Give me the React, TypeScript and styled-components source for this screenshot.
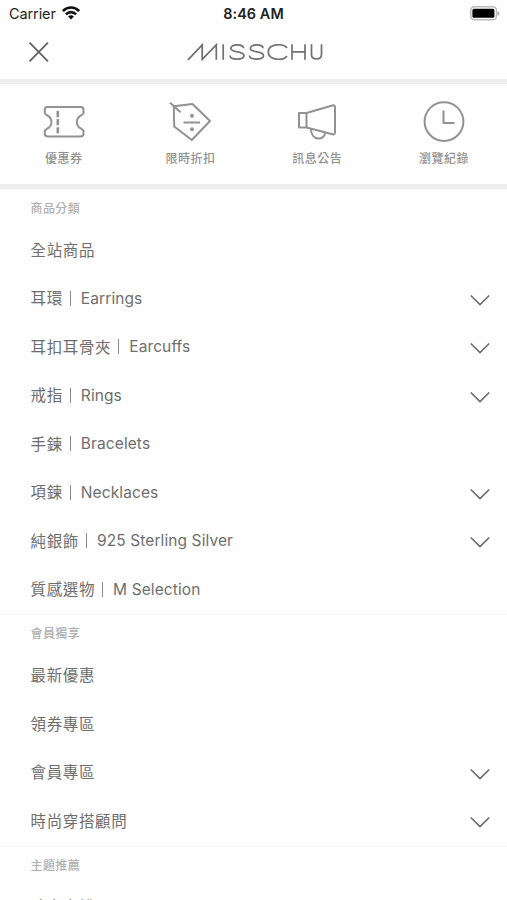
import React from "react";
import styled, { createGlobalStyle } from "styled-components";

const Global = createGlobalStyle`
  * { box-sizing: border-box; }
  html, body { margin: 0; padding: 0; background: #fefefe; overflow: hidden; }
`;

const Screen = styled.div`
  width: 507px;
  height: 900px;
  overflow: hidden;
  display: flex;
  flex-direction: column;
  background: #fefefe;
  color: #6e6e6e;
  font-family: Inter, "Noto Sans CJK TC", sans-serif;
`;

const StatusBar = styled.div`
  height: 28px;
  flex: none;
  display: grid;
  grid-template-columns: 1fr auto 1fr;
  align-items: center;
  padding: 0 7px 1px 9px;
  color: #222;
  font-size: 14.5px;
  line-height: 27px;
`;

const Carrier = styled.div`
  display: flex;
  align-items: center;
  gap: 6px;
  letter-spacing: -0.1px;
`;

const WifiIcon = styled.svg`
  margin-bottom: 2px;
`;

const Clock = styled.div`
  font-weight: 600;
  font-size: 14.4px;
  letter-spacing: 0.1px;
  margin-right: 2px;
`;

const Battery = styled.svg`
  justify-self: end;
`;

const Header = styled.header`
  height: 51px;
  flex: none;
  display: grid;
  grid-template-columns: 1fr auto 1fr;
  align-items: center;
  padding: 0 26px 3px 28px;
`;

const Divider = styled.div`
  height: 5px;
  flex: none;
  background: #efefef;
`;

const Shortcuts = styled.nav`
  height: 100px;
  flex: none;
  display: grid;
  grid-template-columns: repeat(4, 1fr);
`;

const Shortcut = styled.div`
  display: flex;
  flex-direction: column;
  align-items: center;
  padding: 14px 0 0 1px;
  color: #929292;
`;

const ShortcutLabel = styled.span`
  margin-top: 6px;
  font-size: 12px;
  font-weight: 500;
  line-height: 21px;
  letter-spacing: 0.5px;
`;

const Section = styled.section`
  flex: none;

  & + & {
    border-top: 1px solid #f4f4f4;
  }
`;

const SectionTitle = styled.div<{ $lead?: boolean }>`
  height: ${(p) => (p.$lead ? 37 : 36.5)}px;
  padding-left: 30.5px;
  font-size: 12px;
  font-weight: 500;
  line-height: ${(p) => (p.$lead ? 40 : 38)}px;
  letter-spacing: 0.4px;
  color: #b0b0b0;
`;

const Row = styled.div`
  height: 48.5px;
  display: flex;
  align-items: center;
  justify-content: space-between;
  padding: 0 17px 0 30.5px;
  font-size: 15.5px;
  line-height: 24px;
  white-space: pre;
`;

const Label = styled.span`
  display: flex;
  align-items: center;
`;

const Chinese = styled.span`
  letter-spacing: 0.65px;
  margin-top: 1px;
`;

const Latin = styled.span`
  letter-spacing: 0.1px;
`;

const Bar = styled.i`
  width: 1px;
  height: 15px;
  margin: 0 10px 1px 7px;
  background: #8a8a8a;
`;

const ChevronIcon = styled.svg`
  margin-top: 2px;
`;

const Chevron = () => (
  <ChevronIcon width="20" height="12" viewBox="0 0 20 12" fill="none" stroke="#6c6c6c" strokeWidth="1.7">
    <path d="M.8 1.5 10 10.6 19.2 1.5" />
  </ChevronIcon>
);

type Item = { zh: string; en?: string; open?: boolean };

const MenuRow = ({ zh, en, open }: Item) => (
  <Row>
    <Label>
      <Chinese>{zh}</Chinese>
      {en && <Bar />}
      {en && <Latin>{en}</Latin>}
    </Label>
    {open && <Chevron />}
  </Row>
);

const iconProps = {
  width: 44,
  height: 44,
  viewBox: "0 0 44 44",
  fill: "none",
  stroke: "currentColor",
  strokeWidth: 2,
  strokeLinejoin: "round" as const,
};

const shortcuts = [
  {
    label: "優惠券",
    icon: (
      <svg {...iconProps}>
        <path d="M5.2 9H38.8Q41.5 9 41.5 12V15.5L39 17.5C33.5 20 33.5 28 39 30.5L41.5 32.5V35.5Q41.5 38.5 38.5 38.5H5.8Q2.8 38.5 2.8 35.5V32.5L5.3 30.5C10.8 28 10.8 20 5.3 17.5L2.8 15.5V12Q2.8 9 5.2 9Z" />
        <path d="M15.8 13v6.2M15.8 21v6.2M15.8 29.3v6" strokeWidth="2.6" />
      </svg>
    ),
  },
  {
    label: "限時折扣",
    icon: (
      <svg {...iconProps} viewBox="1 0 44 44">
        <path d="M5.8 8.3 24.5 6 42 23 23.8 42 6.2 28.5ZM2 4.8 12.5 14.3" />
        <path d="M15.5 24.5h16.5" />
        <circle cx="24" cy="17.7" r="2" fill="currentColor" stroke="none" />
        <circle cx="24" cy="31.2" r="2" fill="currentColor" stroke="none" />
      </svg>
    ),
  },
  {
    label: "訊息公告",
    icon: (
      <svg {...iconProps} viewBox="-0.5 0 44 44">
        <path d="M3.5 15H11L37 7.5Q39.5 6.8 39.5 9V34Q39.5 37 37 36.3L11 29.5H3.5ZM11 15V29.5M15.5 31C15.5 43 29 43 29.5 35" />
      </svg>
    ),
  },
  {
    label: "瀏覽紀錄",
    icon: (
      <svg {...iconProps}>
        <circle cx="22" cy="23.6" r="19.4" />
        <path d="M21.5 12.5V25H32.5" />
      </svg>
    ),
  },
];

const products: Item[] = [
  { zh: "全站商品" },
  { zh: "耳環", en: "Earrings", open: true },
  { zh: "耳扣耳骨夾", en: "Earcuffs", open: true },
  { zh: "戒指", en: "Rings", open: true },
  { zh: "手鍊", en: "Bracelets" },
  { zh: "項鍊", en: "Necklaces", open: true },
  { zh: "純銀飾", en: "925 Sterling Silver", open: true },
  { zh: "質感選物", en: "M Selection" },
];

const members: Item[] = [
  { zh: "最新優惠" },
  { zh: "領券專區" },
  { zh: "會員專區", open: true },
  { zh: "時尚穿搭顧問", open: true },
];

export default function App() {
  return (
    <Screen>
      <Global />
      <StatusBar>
        <Carrier>
          Carrier
          <WifiIcon width="18" height="14" viewBox="0 0 18 14" fill="none" stroke="#111" strokeWidth="2.6">
            <path d="M.9 5C5.3.4 12.7.4 17.1 5M3.9 8.3C6.8 5.4 11.2 5.4 14.1 8.3" />
            <path d="M9 13.4 6.1 10.4Q9 8 11.9 10.4Z" fill="#111" stroke="none" />
          </WifiIcon>
        </Carrier>
        <Clock>8:46 AM</Clock>
        <Battery width="31" height="15" viewBox="0 0 31 15">
          <rect x="1.8" y=".8" width="25.6" height="13" rx="3.5" fill="#fff" stroke="#bcbcbc" strokeWidth="1.5" />
          <rect x="3.4" y="2.8" width="22" height="9" rx="1.6" fill="#000" />
          <path d="M28.5 5v5q2-1 2-2.5t-2-2.5" fill="#aaa" />
        </Battery>
      </StatusBar>
      <Header>
        <svg width="22" height="22" viewBox="0 0 22 22" stroke="#5e5e5e" strokeWidth="1.7">
          <path d="M1.5 1.7 20 20.3M20 1.7 1.5 20.3" />
        </svg>
        <svg width="138" height="20" viewBox="-1 0 138 20" fill="none" stroke="#707070" strokeWidth="1.7">
          <path d="M1 17.8 15.2 2.8V17.4L29.3 2.8V17.8M36.2 2.2V17.8" />
          <path d="M56.5 6.3C56.5 1.8 43.8 1.8 43.8 6.2C43.8 11.2 57 8.7 57 13.5C57 18.3 43 18.3 43 13.5" />
          <path d="M76 6.3C76 1.8 63.3 1.8 63.3 6.2C63.3 11.2 76.5 8.7 76.5 13.5C76.5 18.3 62.5 18.3 62.5 13.5" />
          <path d="M100 6C96.5 1 81.3 1.5 81.3 10S96.5 19 100 14M105 2.2V17.8M118 2.2V17.8M105 9.8H118M124.5 2.2V12.3Q124.5 17 129.5 17T134.5 12.3V2.2" />
        </svg>
      </Header>
      <Divider />
      <Shortcuts>
        {shortcuts.map((s) => (
          <Shortcut key={s.label}>
            {s.icon}
            <ShortcutLabel>{s.label}</ShortcutLabel>
          </Shortcut>
        ))}
      </Shortcuts>
      <Divider />
      <Section>
        <SectionTitle $lead>商品分類</SectionTitle>
        {products.map((p) => (
          <MenuRow key={p.zh} {...p} />
        ))}
      </Section>
      <Section>
        <SectionTitle>會員獨享</SectionTitle>
        {members.map((p) => (
          <MenuRow key={p.zh} {...p} />
        ))}
      </Section>
      <Section>
        <SectionTitle>主題推薦</SectionTitle>
        <MenuRow zh="時空守護" />
      </Section>
    </Screen>
  );
}
